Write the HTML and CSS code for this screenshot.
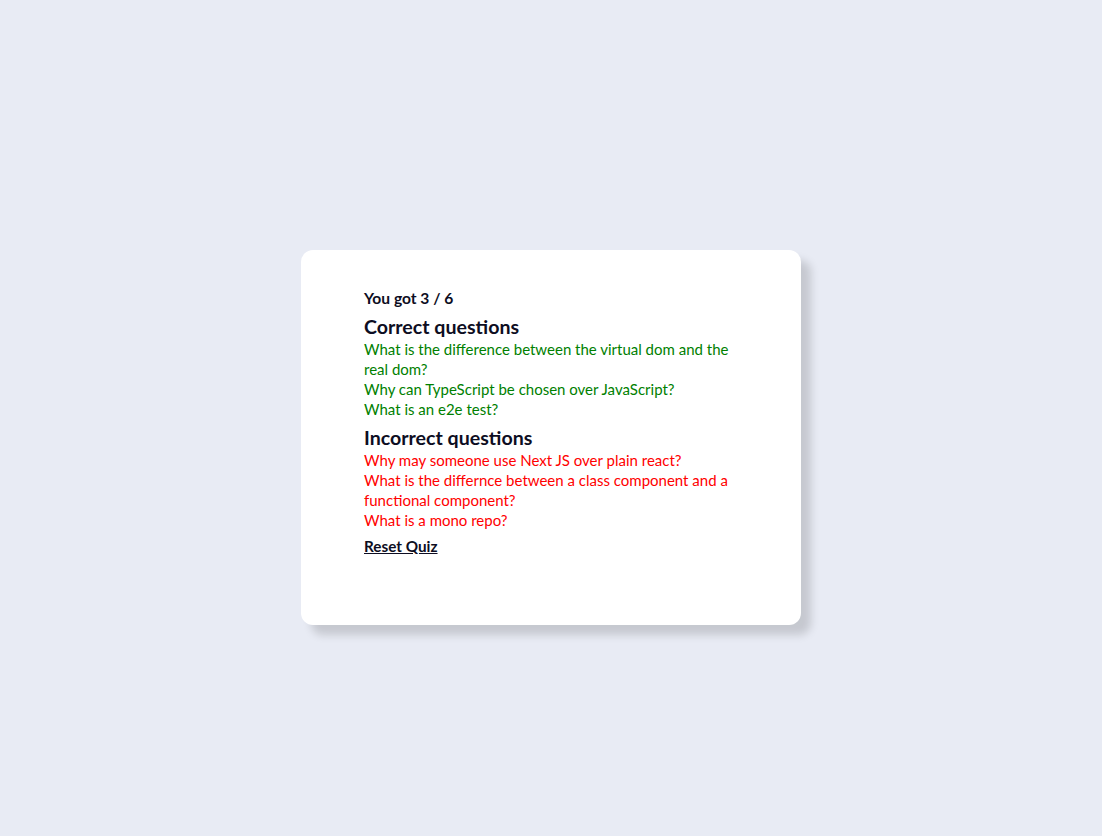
FILE: index.html
```html
<!DOCTYPE html>
<html lang="en">
<head>
<meta charset="utf-8">
<title>Quiz result</title>
<link rel="stylesheet" href="styles.css">
</head>
<body>
<main class="page">
  <section class="card">
    <p class="score">You got 3 / 6</p>
    <h2 class="heading">Correct questions</h2>
    <ul class="list correct">
      <li>What is the difference between the virtual dom and the real dom?</li>
      <li>Why can TypeScript be chosen over JavaScript?</li>
      <li>What is an e2e test?</li>
    </ul>
    <h2 class="heading">Incorrect questions</h2>
    <ul class="list incorrect">
      <li>Why may someone use Next JS over plain react?</li>
      <li>What is the differnce between a class component and a functional component?</li>
      <li>What is a mono repo?</li>
    </ul>
    <a class="reset" href="#">Reset Quiz</a>
  </section>
</main>
</body>
</html>
```
FILE: styles.css
```css
* { box-sizing: border-box; }
html, body { margin: 0; padding: 0; }
body {
  background: #e8ebf4;
  font-family: Lato, "Liberation Sans", sans-serif;
  color: #0d0d22;
}
.page {
  min-height: 100vh;
  display: flex;
  align-items: center;
  justify-content: center;
  padding-top: 39px;
}
.card {
  width: 500px;
  height: 375px;
  background: #fff;
  border-radius: 12px;
  box-shadow: 10px 10px 8px rgba(0,0,0,0.15);
  padding: 38px 63px 0 63px;
}
.score {
  margin: 0;
  font-size: 15.6px;
  font-weight: 700;
  line-height: 20px;
}
.heading {
  margin: 7px 0 0;
  font-size: 19.6px;
  font-weight: 700;
  line-height: 24px;
}
.list {
  list-style: none;
  margin: 0;
  padding: 0;
  font-size: 15px;
  line-height: 20px;
}
.correct { color: #008000; }
.incorrect { color: #ff0000; }
.reset {
  display: inline-block;
  margin-top: 6px;
  font-size: 15.3px;
  font-weight: 700;
  line-height: 20px;
  color: #0d0d22;
  text-decoration: underline;
}
```
